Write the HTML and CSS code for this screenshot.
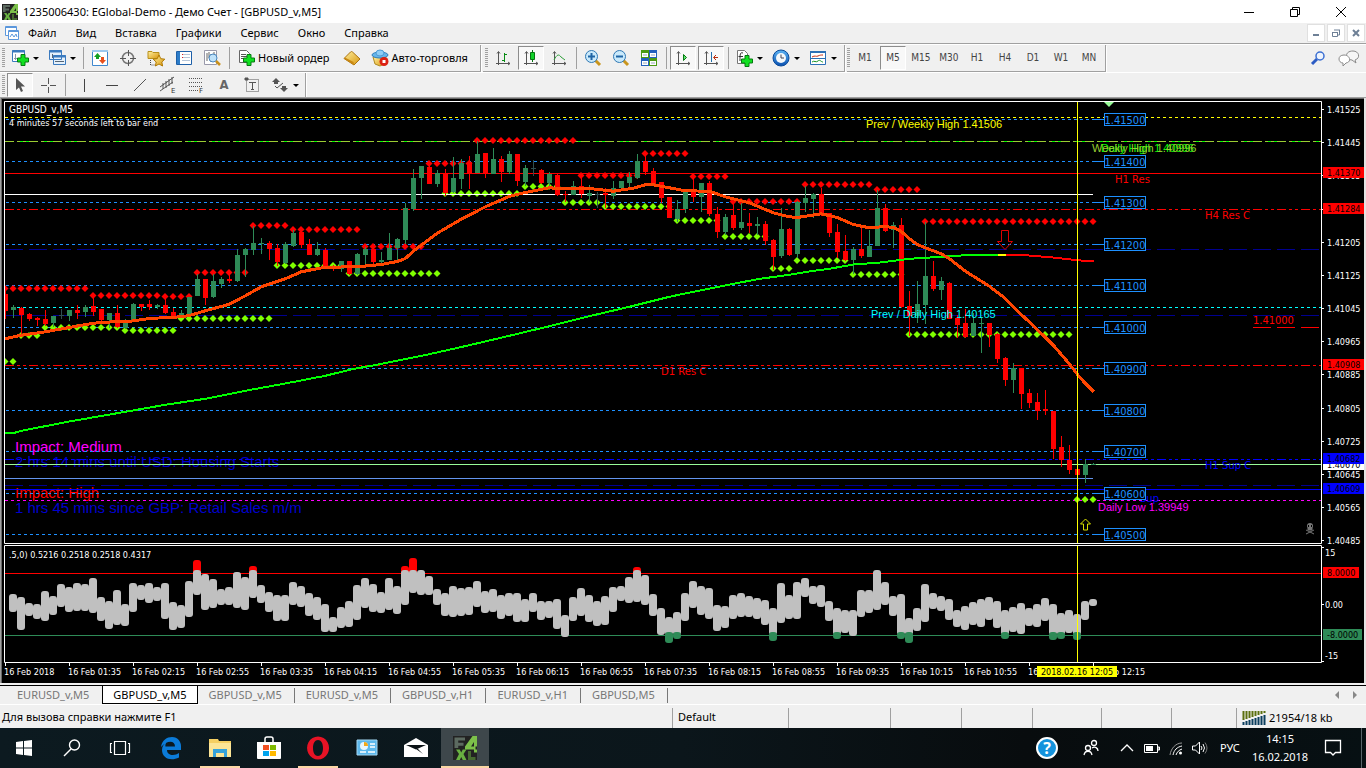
FILE: index.html
```html
<!DOCTYPE html>
<html lang="ru">
<head>
<meta charset="utf-8">
<title>1235006430: EGlobal-Demo - Демо Счет - [GBPUSD_v,M5]</title>
<link rel="stylesheet" href="styles.css">
</head>
<body>
<svg class="defs" aria-hidden="true">
  <defs>
    <linearGradient id="gold" x1="0" y1="0" x2="1" y2="1"><stop offset="0" stop-color="#fff0a0"/><stop offset="1" stop-color="#d8960c"/></linearGradient>
    <linearGradient id="blue" x1="0" y1="0" x2="0" y2="1"><stop offset="0" stop-color="#5cb4f4"/><stop offset="1" stop-color="#0a50b0"/></linearGradient>
    <symbol id="plus" viewBox="0 0 12 12"><path d="M4 .5h4V4h3.500v4H8v3.500H4V8H.5V4H4z" fill="#10e020" stroke="#067a10"/></symbol>
    <symbol id="axes" viewBox="0 0 16 16"><path d="M3.500 15V2M1 13.500h14M2 3.500l1.500-2 1.500 2M13 12l2 1.500-2 1.500" fill="none" stroke="#555"/></symbol>
    <symbol id="fx4" viewBox="0 0 16 16"><path d="M0 0h16v16H0z" fill="#222"/><path d="M1 1h7v2H3.500v1.500H7v2H3.500V8H1z" fill="#5c6a60"/><path d="M13 0h3v7h-2V4l-2 3h3v2H8V7zM14 9h2v2h-2z" fill="#7cc04a"/><path d="M2 9h2.500l1 2 1-2H9l-2 3 2 4H6.500l-1-2-1 2H2l2-4z" fill="#69b141"/><path d="M10 10h2v4h3v2h-5z" fill="#466b30"/></symbol>
  </defs>
</svg>

<header class="title">
  <svg class="i16" viewBox="0 0 16 16"><use href="#fx4"/></svg>
  <h1>1235006430: EGlobal-Demo - Демо Счет - [GBPUSD_v,M5]</h1>
  <div class="winbtns">
    <button aria-label="Свернуть"><svg viewBox="0 0 12 12"><path d="M1 6.500h10" stroke="#000"/></svg></button>
    <button aria-label="Развернуть"><svg viewBox="0 0 12 12"><path d="M1.500 3.500h7v7h-7zM3.500 3.500v-2h7v7h-2" fill="none" stroke="#000"/></svg></button>
    <button aria-label="Закрыть"><svg viewBox="0 0 12 12"><path d="M1 1l10 10M11 1L1 11" stroke="#000"/></svg></button>
  </div>
</header>

<nav class="menu">
  <svg class="i16" viewBox="0 0 16 16"><path d="M1.500 1.500h11v9h-11z" fill="#fff" stroke="#5b97dc"/><path d="M1 2.500h12" stroke="#5b97dc"/><path d="M4.500 5.500h10v9h-10z" fill="#fff" stroke="#5b97dc"/><path d="M5 6.500h9M6 12l2-3 2 3 2-3 1 3" fill="none" stroke="#5b97dc"/></svg>
  <button>Файл</button><button>Вид</button><button>Вставка</button><button>Графики</button><button>Сервис</button><button>Окно</button><button>Справка</button>
  <div class="mdi">
    <button aria-label="Свернуть окно"><svg viewBox="0 0 10 10"><path d="M2 7h6" stroke="#6e8096" stroke-width="2"/></svg></button>
    <button aria-label="Восстановить окно"><svg viewBox="0 0 10 10"><path d="M1.500 4.500h5v4h-5zM3 2h6M8.500 2v5h-2M1 4.500h6" fill="none" stroke="#6e8096"/></svg></button>
    <button aria-label="Закрыть окно"><svg viewBox="0 0 10 10"><path d="M2 2l6 6M8 2L2 8" stroke="#6e8096" stroke-width="2"/></svg></button>
  </div>
</nav>

<div class="row">
  <div class="bar">
    <i class="grip"></i>
    <button class="drop" aria-label="Новый график"><svg viewBox="0 0 18 18"><path d="M1.500 1.500h12v11h-12z" fill="#fff" stroke="#3a7abf"/><path d="M1 2.500h13" stroke="#3a7abf" stroke-width="2"/><path d="M4.500 5v6M3 9.500h7" stroke="#89a"/><use href="#plus" x="6" y="5" width="12" height="12"/></svg><i class="arr"></i></button>
    <button class="drop" aria-label="Профили"><svg viewBox="0 0 18 18"><path d="M1.500 1.500h12v9h-12zM5.500 6.500h12v9h-12z" fill="#e6f1fb" stroke="#3a7abf"/><path d="M1 2.500h13M5 7.500h13" stroke="#3a7abf" stroke-width="2"/><path d="M7 12.500h9M4.500 5v4" stroke="#567"/></svg><i class="arr"></i></button>
    <i class="sep"></i>
    <button aria-label="Обзор рынка"><svg viewBox="0 0 18 18"><path d="M1.500 1.500h15v15h-15z" fill="#fff" stroke="#3f88cf"/><path d="M1 2h16" stroke="#9cc8ee" stroke-width="2"/><path d="M3 8l3.500-4L10 8H8v2H5V8z" fill="#12a022"/><path d="M8 11l3.500 4 3.500-4h-2V8h-3v3z" fill="#e8501c"/></svg></button>
    <button aria-label="Окно данных"><svg viewBox="0 0 18 18"><circle cx="9" cy="9" r="5.500" fill="none" stroke="#777" stroke-width="1.500"/><path d="M9.500 1v6M9.500 11v6M1 9.500h6M11 9.500h6" stroke="#555"/></svg></button>
    <button aria-label="Навигатор"><svg viewBox="0 0 18 18"><path d="M1 2.500h4l1 1h6v6H1z" fill="url(#gold)" stroke="#b8901c"/><path d="M3.500 11v5h4" fill="none" stroke="#444" stroke-dasharray="1 1"/><path d="M12 6l1.800 3.700 4 .5-3 2.800.8 4-3.600-2-3.600 2 .8-4-3-2.800 4-.5z" fill="url(#gold)" stroke="#b07800"/></svg></button>
    <button aria-label="Терминал"><svg viewBox="0 0 18 18"><path d="M1.500 2.500h15v13h-15z" fill="#fff" stroke="#1d5fa8"/><path d="M2 3h3v12H2z" fill="#2c7cc8"/><path d="M7 5.500h8M7 8.500h8M7 11.500h8" stroke="#b5c5d8"/><path d="M7 5.500h1M7 8.500h1" stroke="#d22"/></svg></button>
    <button aria-label="Тестер"><svg viewBox="0 0 18 18"><path d="M1.500 1.500h12v14h-12z" fill="#fff" stroke="#99a"/><path d="M4 4v8M6 3v6M8 5v8M11 3v8" stroke="#666"/><circle cx="10" cy="9" r="4" fill="#bfe2fa" stroke="#4a86bd"/><path d="M13 12l4 4" stroke="#c9901a" stroke-width="2.500"/></svg></button>
    <i class="sep"></i>
    <button class="text"><svg viewBox="0 0 18 18"><path d="M2.500 1.500h7l3 3v9h-10z" fill="#fff" stroke="#666"/><path d="M4 5.500h5M4 7.500h6M4 9.500h4" stroke="#555"/><use href="#plus" x="6" y="5" width="12" height="12"/></svg>Новый ордер</button>
    <button aria-label="MetaEditor"><svg viewBox="0 0 18 18"><path d="M1 9.500L7.500 3q1-1 2 0L17 10l-6 6z" fill="url(#gold)" stroke="#ab7412"/><path d="M1 9.500L11 16l-.5-3L2 8.500z" fill="#c98812"/></svg></button>
    <button class="text"><svg viewBox="0 0 18 18"><path d="M2 8h13l-2 7-4 2-5-2z" fill="url(#gold)" stroke="#b08a20"/><ellipse cx="9" cy="6" rx="8" ry="3" fill="#66b5ea" stroke="#2f80bd"/><ellipse cx="9" cy="4" rx="4" ry="3" fill="#8fcdf5" stroke="#4d9cd5"/><circle cx="13" cy="12.500" r="4.500" fill="#dc2113"/><path d="M11.500 11h3v3h-3z" fill="#fff"/></svg>Авто-торговля</button>
  </div>
  <div class="bar">
    <i class="grip"></i>
    <button aria-label="Бары"><svg viewBox="0 0 16 16"><use href="#axes"/><path d="M9.500 3v9M9.500 4.500H12M7 10.500h2" stroke="#078a12"/></svg></button>
    <button class="on" aria-label="Свечи"><svg viewBox="0 0 16 16"><use href="#axes"/><path d="M9.500 0v12" stroke="#067312"/><path d="M7.500 2.500h4v7h-4z" fill="#10d228" stroke="#067312"/></svg></button>
    <button aria-label="Линия"><svg viewBox="0 0 16 16"><use href="#axes"/><path d="M3 10c3-6 5-6 7-3l4 3" fill="none" stroke="#2fa03a"/></svg></button>
    <i class="sep"></i>
    <button aria-label="Увеличить"><svg viewBox="0 0 18 18"><path d="M11 11l5 5" stroke="#c9951d" stroke-width="3"/><circle cx="7.500" cy="7.500" r="6" fill="#c9e9fb" stroke="#2f78b4"/><path d="M4 7.500h7M7.500 4v7" stroke="#1f65a5" stroke-width="2"/></svg></button>
    <button aria-label="Уменьшить"><svg viewBox="0 0 18 18"><path d="M11 11l5 5" stroke="#c9951d" stroke-width="3"/><circle cx="7.500" cy="7.500" r="6" fill="#c9e9fb" stroke="#2f78b4"/><path d="M4 7.500h7" stroke="#1f65a5" stroke-width="2"/></svg></button>
    <button aria-label="Плитка"><svg viewBox="0 0 18 18"><path d="M1 1h8v8H1zM9 9h8v8H9z" fill="#4a9a12"/><path d="M9 1h8v8H9zM1 9h8v8H1z" fill="#2360bd"/><path d="M2 4h6v4H2zM10 4h6v4h-6zM2 12h6v4H2zM10 12h6v4h-6z" fill="#fff"/><path d="M3 6h4M11 6h4M3 14h4M11 14h4" stroke="#9ab"/></svg></button>
    <i class="sep"></i>
    <button class="on" aria-label="Автопрокрутка"><svg viewBox="0 0 16 16"><use href="#axes"/><path d="M8.500 4.500l3 3-3 3z" fill="#62e070" stroke="#067a12"/></svg></button>
    <button class="on" aria-label="Сдвиг графика"><svg viewBox="0 0 16 16"><use href="#axes"/><path d="M8.500 2v10" stroke="#2470aa"/><path d="M15 7.500h-4M13 5l-2.500 2.500L13 10" fill="none" stroke="#b82c0c"/></svg></button>
    <i class="sep"></i>
    <button class="drop" aria-label="Индикаторы"><svg viewBox="0 0 18 18"><path d="M2.500 1.500h7l3 3v10h-10z" fill="#fff" stroke="#777"/><path d="M8 4c-3-1-3 1-3 8M3.500 7.500H8" fill="none" stroke="#333"/><use href="#plus" x="6" y="6" width="12" height="12"/></svg><i class="arr"></i></button>
    <button class="drop" aria-label="Периоды"><svg viewBox="0 0 18 18"><circle cx="9" cy="9" r="8" fill="url(#blue)" stroke="#0a4a9a"/><circle cx="9" cy="9" r="5" fill="#f4f8fb"/><path d="M9 5.500V9h3" fill="none" stroke="#445"/></svg><i class="arr"></i></button>
    <button class="drop" aria-label="Шаблоны"><svg viewBox="0 0 18 18"><path d="M1.500 2.500h15v13h-15z" fill="#fff" stroke="#2b6fb5"/><path d="M1 3h16" stroke="#2b6fb5" stroke-width="2"/><path d="M2 9.500h14" stroke="#2b6fb5"/><path d="M3 8c3-2 4 0 6-1s3-1 5-1" fill="none" stroke="#c62c10"/><path d="M3 13c2-2 4 1 6-1s3 1 5 1" fill="none" stroke="#159424"/></svg><i class="arr"></i></button>
  </div>
  <div class="bar tf">
    <i class="grip"></i>
    <button>M1</button><button class="on">M5</button><button>M15</button><button>M30</button><button>H1</button><button>H4</button><button>D1</button><button>W1</button><button>MN</button>
  </div>
  <div class="right">
    <button aria-label="Поиск"><svg viewBox="0 0 18 18"><path d="M8 9l-5 5" stroke="#2c5cc4" stroke-width="3"/><circle cx="11" cy="6" r="4" fill="#eef4fd" stroke="#3b6fd2" stroke-width="1.500"/></svg></button>
    <button class="chat" aria-label="Чат"><svg viewBox="0 0 22 18"><path d="M15 1c-9 0-8 9-1 9l4 3-1-3c6-2 4-9-2-9z" fill="#f6f6f6" stroke="#8a8a8a"/><path d="M6 5c-7 0-6 8-1 8v3l3-3c6-1 4-8-2-8z" fill="#fff" stroke="#8a8a8a"/></svg></button>
  </div>
</div>

<div class="row second">
  <div class="bar">
    <i class="grip"></i>
    <button class="on" aria-label="Курсор"><svg viewBox="0 0 16 16"><path d="M4 1v12l3-2.500 2 4.500 2-1-2-4.500h4z" fill="#555"/></svg></button>
    <button aria-label="Перекрестие"><svg viewBox="0 0 16 16"><path d="M8.500 1v6M8.500 10v6M1 8.500h6M10 8.500h6" stroke="#555"/></svg></button>
    <i class="sep"></i>
    <button aria-label="Вертикальная линия"><svg viewBox="0 0 16 16"><path d="M8.500 2v13" stroke="#444"/></svg></button>
    <button aria-label="Горизонтальная линия"><svg viewBox="0 0 16 16"><path d="M2 8.500h12" stroke="#444"/></svg></button>
    <button aria-label="Трендовая линия"><svg viewBox="0 0 16 16"><path d="M2 14L14 2" stroke="#555"/></svg></button>
    <button aria-label="Канал"><svg viewBox="0 0 18 18"><path d="M1 11L15 1M1 15L14 6M4 7v6M7 5v7M10 3v7M13 1v7" stroke="#555"/><text x="12" y="17" class="tiny">E</text></svg></button>
    <button aria-label="Фибоначчи"><svg viewBox="0 0 18 18"><path d="M2 2.500h14M2 6.500h14M2 10.500h14M2 14.500h9" stroke="#555" stroke-dasharray="1 1"/><text x="12" y="17" class="tiny">F</text></svg></button>
    <button class="letter">A</button>
    <button aria-label="Метка"><svg viewBox="0 0 18 18"><path d="M3.500 3.500h12v12h-12z" fill="none" stroke="#555" stroke-dasharray="1 1"/><path d="M2 2h3v2H2zM6 6.500h7M9.500 6v7M8 13.500h3" fill="#555" stroke="#555"/></svg></button>
    <button class="drop" aria-label="Стрелки"><svg viewBox="0 0 18 18"><path d="M5 2l4 4H7v2H3V6H1zM13 16l-4-4h2v-2h4v2h2z" fill="#555"/><path d="M4 10l2 2 6-5" fill="none" stroke="#555"/></svg><i class="arr"></i></button>
  </div>
</div>

<main class="chart"><svg id="chart" viewBox="0 97 1366 588" preserveAspectRatio="none" role="img" aria-label="GBPUSD M5"></svg></main>

<nav class="tabs">
  <button>EURUSD_v,M5</button><button class="active">GBPUSD_v,M5</button><button>GBPUSD_v,M5</button><button>EURUSD_v,M5</button><button>GBPUSD_v,H1</button><button>EURUSD_v,H1</button><button>GBPUSD,M5</button>
  <div class="scroll"><button aria-label="Назад"><i class="lt"></i></button><button aria-label="Вперед"><i class="gt"></i></button></div>
</nav>

<footer class="status">
  <span>Для вызова справки нажмите F1</span><span>Default</span><span></span><span></span><span></span><span></span><span></span><span></span>
  <span class="traffic"><svg viewBox="0 0 24 14"><path d="M1.500 0v9M4.500 0v8M7.500 0v7M10.500 0v6M13.500 0v5M16.500 0v4M19.500 0v3M22.500 0v2" stroke="#5c7010" stroke-width="2"/><path d="M1.500 11v3M4.500 10v4M7.500 9v5M10.500 8v6M13.500 7v7M16.500 6v8M19.500 5v9M22.500 4v10" stroke="#0c3f5e" stroke-width="2"/></svg>21954/18 kb</span>
</footer>

<div class="taskbar">
  <button aria-label="Пуск"><svg viewBox="0 0 24 24"><path d="M4 6l7-1v6.500H4zM12 5l8-1v7.500h-8zM4 12.500h7V19l-7-1zM12 12.500h8V20l-8-1z" fill="#fff"/></svg></button>
  <button aria-label="Поиск Windows"><svg viewBox="0 0 24 24"><circle cx="14.500" cy="9" r="5" fill="none" stroke="#fff" stroke-width="1.400"/><path d="M11 13l-7 7" stroke="#fff" stroke-width="1.400"/></svg></button>
  <button aria-label="Представление задач"><svg viewBox="0 0 24 24"><path d="M6.500 5.500h11v13h-11zM4 7.500H2.500v9H4M20 7.500h1.500v9H20" fill="none" stroke="#fff" stroke-width="1.200"/></svg></button>
  <div class="pinned">
    <button aria-label="Edge"><svg viewBox="0 0 24 24"><path d="M2 11C3 4 8 1 13 1c6 0 9 5 9 9v4H8c0 6 8 6 12 3v4.500c-8 4-17 1-17-7.500 0-4 2-6 5-8-1 1-2 3-1.500 4.500h9.500C16 4 8 4 2 11z" fill="#0b7bd8"/></svg></button>
    <button class="run" aria-label="Проводник"><svg viewBox="0 0 24 24"><path d="M1 3h9l1 2h12v16H1z" fill="#f5cf62"/><path d="M1 7h22v14H1z" fill="#fce596"/><path d="M5 13h14v8h-3v-4H8v4H5z" fill="#36a3da"/></svg></button>
    <button aria-label="Магазин"><svg viewBox="0 0 24 24"><path d="M0 6h24v16q0 1-1 1H1q-1 0-1-1z" fill="#fff"/><path d="M8 7V3q0-2 2-2h4q2 0 2 2v4" fill="none" stroke="#fff" stroke-width="1.500"/><path d="M6 9h6v5H6z" fill="#f25022"/><path d="M13 9h6v5h-6z" fill="#7fba00"/><path d="M6 15h6v5H6z" fill="#00a4ef"/><path d="M13 15h6v5h-6z" fill="#ffb900"/></svg></button>
    <button class="run" aria-label="Opera"><svg viewBox="0 0 24 24"><path fill-rule="evenodd" d="M12 0.500a11 11.500 0 1 0 .1 0zM12 4c3 0 5 3 5 8s-2 8-5 8-5-3-5-8 2-8 5-8z" fill="#e81325"/></svg></button>
    <button aria-label="Панель"><svg viewBox="0 0 24 24"><path d="M2 4h20v15H2z" fill="#5db8ec" stroke="#a5d8f5"/><circle cx="9" cy="10" r="4" fill="#e9f6fd"/><path d="M9 10V6a4 4 0 0 1 4 4z" fill="#f5a818"/><path d="M15 8h5M15 11h5M5 16h6M13 16h7" stroke="#fff" stroke-width="1.500"/></svg></button>
    <button aria-label="Почта"><svg viewBox="0 0 24 24"><path d="M0 9l12-7 12 7v12H0z" fill="#fff"/><path d="M2 9h20l-10 4.500zM12 13l7 5-5-5z" fill="#0b1216"/></svg></button>
    <button class="run cur" aria-label="MetaTrader"><svg viewBox="0 0 24 24"><use href="#fx4"/></svg></button>
  </div>
  <div class="tray">
    <button class="help" aria-label="Справка Windows">?</button>
    <button class="ppl" aria-label="Люди"><svg viewBox="0 0 20 20"><g fill="none" stroke="#fff" stroke-width="1.300"><circle cx="7" cy="10" r="2.500"/><path d="M3 17c1-5 7-5 8 0"/><circle cx="13" cy="5" r="2.500"/><path d="M11 10c3-2 6 0 6 3"/></g></svg></button>
    <button class="chev" aria-label="Скрытые значки"><svg viewBox="0 0 16 16"><path d="M2 11l6-6 6 6" fill="none" stroke="#fff" stroke-width="1.300"/></svg></button>
    <button class="ic" aria-label="Батарея"><svg viewBox="0 0 16 16"><path d="M.5 4.500h13v8H.5zM14 7h1.500v3H14z" fill="none" stroke="#fff"/><path d="M2 6h7v5H2z" fill="#fff"/></svg></button>
    <button class="ic" aria-label="Сеть"><svg viewBox="0 0 16 16"><g fill="none" stroke="#999"><path d="M2 15C3 8 8 3 14 3"/><path d="M5 15c1-5 4-8 9-9" stroke="#fff"/><path d="M8 15c1-3 3-5 6-6" stroke="#fff"/></g><circle cx="12.500" cy="13" r="1.500" fill="#fff"/></svg></button>
    <button class="ic" aria-label="Звук"><svg viewBox="0 0 16 16"><path d="M.5 6h3l4-4v12l-4-4h-3z" fill="none" stroke="#fff"/><path d="M9 6q2 2 0 4M11 4q3 4 0 8" fill="none" stroke="#fff"/><path d="M13 2.500q4 5.500 0 11" fill="none" stroke="#777"/></svg></button>
    <button class="lang">РУС</button>
    <div class="clock"><time>14:15</time><time>16.02.2018</time></div>
    <button class="note" aria-label="Уведомления"><svg viewBox="0 0 18 18"><path d="M1.500 1.500h15v12h-5l-2.500 2.500-2.500-2.500h-5z" fill="none" stroke="#fff" stroke-width="1.300"/></svg></button>
  </div>
</div>
<script src="chart.js"></script>
</body>
</html>
```
FILE: styles.css
```css
* { box-sizing: border-box; }
html, body { height: 100%; margin: 0; }
body {
  display: flex; flex-direction: column; overflow: hidden;
  background: #f0f0f0; color: #000;
  font: 11px/16px "Noto Sans", "Open Sans", sans-serif;
}
button { border: 0; padding: 0; margin: 0; background: none; font: inherit; color: inherit; display: flex; align-items: center; justify-content: center; }
svg { display: block; flex: none; }
.defs { position: absolute; width: 0; height: 0; }
.i16 { width: 16px; height: 16px; }

.title { height: 23px; flex: none; display: flex; align-items: center; gap: 5px; padding-left: 2px; background: #fff; }
.title h1 { margin: 0; font-size: 11px; font-weight: 400; white-space: nowrap; }
.winbtns { margin-left: auto; display: flex; padding-right: 2px; }
.winbtns button { width: 46px; height: 22px; }
.winbtns svg { width: 12px; height: 12px; }

.menu { height: 21px; flex: none; display: flex; align-items: center; padding-left: 4px; border-bottom: 1px solid #a0a0a0; }
.menu > button { padding: 0 10px 0 9px; }
.menu .i16 { margin-right: -1px; }
.mdi { margin-left: auto; display: flex; gap: 2px; padding-right: 1px; }
.mdi button { width: 18px; height: 18px; background: #fff; border: 1px solid #e0e0e0; }
.mdi svg { width: 10px; height: 10px; }

.row { height: 28px; flex: none; display: flex; gap: 2px; border-top: 1px solid #fff; }
.second { height: 25px; }
.bar { display: flex; align-items: center; gap: 2px; padding: 0 3px 0 2px; border: solid #a0a0a0; border-width: 0 1px 1px 0; box-shadow: 1px 1px #fff; }
.second .bar { border-bottom: 0; box-shadow: 1px 0 #fff; }
.grip { width: 3px; height: 20px; background: repeating-linear-gradient(#a0a0a0 0 1px, #f0f0f0 1px 2px); }
.sep { width: 1px; height: 22px; margin: 0 1px 0 2px; background: #a0a0a0; }
.second .sep { margin-right: 3px; }
.bar button { width: 26px; height: 24px; }
.bar button svg { width: 18px; height: 18px; }
.bar button svg[viewBox="0 0 16 16"] { width: 16px; height: 16px; }
.bar .on { background: #f8f8f8; border: 1px solid #fff; border-top-color: #8c8c8c; border-left-color: #8c8c8c; }
.bar .drop { width: 35px; gap: 4px; }
.bar .text { width: auto; gap: 3px; padding: 0 7px 0 4px; white-space: nowrap; }
.bar .text:last-child { padding-right: 9px; }
.arr { border: 3px solid transparent; border-top-color: #000; border-bottom: 0; }
.tf { padding-left: 0; }
.tf button, .letter { font: 10px/14px "DejaVu Sans Condensed", sans-serif; color: #444; }
.bar .letter { font-size: 13px; font-weight: 700; color: #666; }
.tiny { font: 7px "DejaVu Sans", sans-serif; fill: #333; }
.right { margin-left: auto; display: flex; align-items: center; gap: 11px; padding-right: 6px; }
.right svg { width: 18px; height: 18px; }
.right .chat svg { width: 22px; }

.chart { flex: 1; min-height: 0; overflow: hidden; background: #000; }
.chart svg { width: 100%; height: 100%; }
.ax { font: 9px "DejaVu Sans Condensed", sans-serif; }
.sy { font: 10px "DejaVu Sans Condensed", sans-serif; }
.lv { font: 11px "DejaVu Sans Condensed", sans-serif; }
.vd { font: 10px "DejaVu Sans", sans-serif; }
.ar { font: 11px "Liberation Sans", sans-serif; }
.nw { font: 15px "Liberation Sans", sans-serif; }

.tabs { height: 20px; flex: none; display: flex; align-items: stretch; border-top: 1px solid #000; border-bottom: 1px solid #fff; color: #777; }
.tabs > button { padding: 0 12px 2px 11px; border-right: 1px solid #777; margin: 2px 0; height: 15px; }
.tabs > button:first-child { padding-left: 17px; padding-right: 13px; border-right: 0; }
.tabs > .active { margin: 0; height: 18px; background: #fff; color: #000; border: 1px solid #000; border-top: 0; padding: 0 10px; }
.scroll { margin-left: auto; display: flex; gap: 14px; padding-right: 9px; }
.lt, .gt { border: 4px solid transparent; }
.lt { border-right-color: #888; border-left: 0; }
.gt { border-left-color: #888; border-right: 0; }

.status { height: 23px; flex: none; display: grid; grid-template-columns: 1fr 116px 102px 71px 71px 69px 70px 65px 130px; align-items: stretch; padding-top: 3px; line-height: 18px; }
.status span { padding-left: 5px; border-left: 1px solid #a0a0a0; white-space: nowrap; }
.status span:first-child { padding-left: 2px; border: 0; }
.traffic { display: flex; align-items: center; gap: 3px; }
.traffic svg { width: 24px; height: 14px; }

.taskbar { height: 40px; flex: none; display: flex; background: linear-gradient(90deg, #0c1a20, #0b161b 50%, #080c0e 75%, #071013); color: #fff; }
.taskbar button { width: 48px; height: 40px; }
.taskbar button svg { width: 24px; height: 24px; }
.pinned { display: flex; gap: 1px; padding-left: 3px; }
.pinned .run { background: linear-gradient(#fbd7a5, #fbd7a5) center bottom / 40px 2px no-repeat; }
.pinned .cur { background: linear-gradient(#fbd7a5, #fbd7a5) center bottom / 48px 2px no-repeat #3e474b; }
.tray { margin-left: auto; display: flex; align-items: center; padding-right: 8px; background: linear-gradient(#59656a, #59656a) right 4px top / 1px 100% no-repeat; }
.taskbar .help { width: 22px; height: 22px; border-radius: 50%; border: 2px solid #fff; background: #1593dd; font-size: 16px; font-weight: 700; margin-right: 23px; }
.taskbar .ppl, .taskbar .ppl svg { width: 20px; height: 20px; }
.taskbar .ppl { margin-right: 14px; }
.taskbar .chev, .taskbar .ic { width: 24px; }
.taskbar .chev svg, .taskbar .ic svg { width: 16px; height: 16px; }
.taskbar .chev { margin-right: 1px; }
.taskbar .lang { width: 36px; }
.clock { width: 64px; display: flex; flex-direction: column; align-items: center; gap: 2px; }
.taskbar .note { width: 42px; margin-right: 4px; }
.taskbar .note svg { width: 18px; height: 18px; }
```
FILE: chart.js
```js
const parts = [];
const px = k => 5 + 8 * k;
const rect = (x, y, w, h, fill, extra = '') => parts.push(`<rect x="${x}" y="${y}" width="${w}" height="${h}" fill="${fill}" ${extra}/>`);
const line = (y, x1, x2, color, dash = '', off = 0) =>
  parts.push(`<path d="M${x1} ${y + 0.5}H${x2}" stroke="${color}" ${dash ? `stroke-dasharray="${dash}" stroke-dashoffset="${off}"` : ''}/>`);
const text = (x, y, cls, fill, s, anchor = 'start') => parts.push(`<text x="${x}" y="${y}" class="${cls}" fill="${fill}" text-anchor="${anchor}">${s}</text>`);
const DODGER = '#1e90ff', RED = '#ff0000', GREEN = '#2e8b57', LIME = '#7fff00';

rect(0, 97, 1366, 588, '#000');
rect(0, 97, 1366, 1, '#a0a0a0'); rect(0, 98, 1366, 1, '#696969');
rect(0, 97, 1, 588, '#a0a0a0'); rect(1, 98, 1, 586, '#696969');
rect(1364, 98, 2, 587, '#e3e3e3'); rect(0, 683, 1366, 2, '#f0f0f0');

// news messages
text(15, 452, 'nw', '#ff00ff', 'Impact: Medium');
text(15, 467, 'nw', '#0000cd', '2 hrs 14 mins until USD: Housing Starts');
text(15, 498, 'nw', '#ff0000', 'Impact: High');
text(15, 513, 'nw', '#0000cd', '1 hrs 45 mins since GBP: Retail Sales m/m');

// horizontal levels
line(117, 5, 1321, '#ffff00', '3 3');
line(141, 5, 1321, '#9acd32', '9 3');
line(141, 20, 1321, '#00ff00', '3 21');
line(141, 26, 1321, '#00ff00', '3 21');
line(173, 5, 1321, RED);
line(209, 5, 1321, RED, '9 3 3 3 3 3');
line(249, 5, 1321, '#000090', '18 6');
line(307, 5, 1321, '#00ffff', '3 3');
line(315, 5, 1321, '#000090', '18 6');
line(327, 1253, 1321, RED, '18 6');
line(365, 5, 1321, RED, '9 3 3 3 3 3');
line(459, 5, 1321, '#0000ff', '9 3 3 3 3 3');
line(485, 5, 1321, '#000090', '18 6');
line(489, 5, 1321, '#0000ff');
line(500, 5, 1321, '#ff00ff', '3 3');
text(1140, 502, 'vd', '#0000ff', 'Sup');
const levels = [[119, '1.41500'], [161, '1.41400'], [202, '1.41300'], [244, '1.41200'], [285, '1.41100'], [327, '1.41000'], [368, '1.40900'], [410, '1.40800'], [451, '1.40700'], [493, '1.40600'], [534, '1.40500']];
for (const [y] of levels) line(y, 6, 1092, DODGER, '3 3');

// fractal dots: [first bar, last bar, y]
const dots = (list, color) => {
  for (const [a, b, z] of list) for (let k = a; k <= b; k++) {
    const x = px(k), y = 98.5 + Math.round(z / 3);
    parts.push(`<path d="M${x - 3.500} ${y}l3.500-3.500 3.500 3.500-3.500 3.500z" fill="${color}"/>`);
  }
};
parts.push('<clipPath id="in"><rect x="5" y="102" width="1316" height="441"/></clipPath><g clip-path="url(#in)">');
dots([[0,10,571],[11,19,592],[20,23,595],[24,30,523],[31,35,382],[36,44,394],[45,52,445],[53,58,196],[59,71,127],[72,79,232],[80,85,166],[86,90,235],[91,99,310],[100,108,259],[109,114,274],[115,136,370]], RED);
dots([[0,1,790],[2,4,712],[5,14,688],[15,21,697],[22,33,661],[34,42,502],[43,54,526],[55,64,286],[65,69,265],[70,74,313],[75,83,325],[84,89,367],[90,95,415],[96,98,511],[99,105,487],[106,112,529],[113,133,709],[134,136,1204]], LIME);

line(194, 5, 1093, '#fff');
line(478, 5, 1093, '#6495ed');
line(464, 5, 1321, '#98fb98');

// candles: direction, high, body top, body bottom, low (thirds of a pixel below 98)
const candles = `R570,588,638,662 G620,628,636,660 R627,630,651,715 R645,648,663,668 R657,660,666,684 R636,663,678,685 G654,654,675,686 D633,652,654,664 G636,636,654,668 R621,636,645,663 G620,628,642,657 R598,624,642,654 R633,633,666,670 G645,645,666,690 R621,645,688,690 G662,666,690,692 G615,618,669,671 R618,618,627,639 R606,618,627,636 G618,621,627,633 R600,621,645,648 R630,642,654,660 G636,645,654,660 G597,597,648,650 G527,543,594,594 R543,543,600,620 G528,549,597,600 G537,543,558,570 R520,543,549,555 G453,471,549,552 G450,453,471,537 G384,435,456,471 G420,435,438,468 R430,435,453,486 R438,450,492,505 G432,438,495,498 G396,405,444,447 R400,402,441,450 R423,438,471,471 G432,453,471,474 R450,456,507,510 R500,504,513,518 G489,489,513,522 R489,489,528,530 G465,468,528,530 G448,453,471,498 R450,453,492,507 G462,486,492,503 G405,450,486,487 G420,423,450,490 G315,330,426,438 G213,240,333,339 G204,204,240,303 R204,207,258,258 G216,225,258,267 R213,228,285,294 G177,240,282,285 G183,195,243,273 R174,192,225,273 G130,168,225,225 R165,165,228,240 G150,183,228,228 R174,183,222,252 G159,168,222,228 R168,168,249,264 G201,210,252,264 D186,210,213,234 R213,216,255,258 G222,228,255,264 R228,231,291,294 R279,288,291,312 G249,264,291,291 R235,264,288,300 G261,285,294,312 D282,287,290,330 R270,286,290,330 G249,270,294,303 G249,249,270,276 G222,237,255,267 G168,189,240,243 R168,189,222,231 R210,219,258,258 R252,252,300,315 R297,297,360,360 G306,333,363,372 G273,279,333,345 R240,276,297,312 G255,255,297,342 R249,255,348,354 R327,348,402,420 G348,357,402,411 R312,351,390,396 G315,372,390,396 R345,375,384,405 G357,378,384,411 R369,378,429,441 R423,426,477,516 G330,393,474,480 R390,393,471,474 G310,312,468,480 G264,300,315,342 G285,288,303,360 R270,288,348,354 R346,346,405,417 R378,402,462,480 R411,459,486,490 G447,453,486,528 R390,453,474,480 G396,444,477,477 G276,330,444,444 R318,330,399,402 G372,381,396,450 R360,381,627,630 R579,624,654,714 G549,618,654,675 G372,534,621,678 R489,534,573,579 G537,549,576,606 R552,555,663,663 R651,660,681,719 R633,675,717,719 G645,675,714,714 G660,675,678,765 R675,675,711,747 R705,708,783,795 R777,780,846,864 G795,810,846,885 R810,810,888,933 R873,885,915,930 R885,912,939,966 R876,933,938,951 R939,939,1053,1083 R1014,1047,1086,1107 R1041,1086,1116,1128 R1110,1113,1131,1206 G1083,1098,1131,1155 G1095,1098,1101,1101`;
candles.split(' ').forEach((c, k) => {
  const color = { R: RED, G: GREEN, D: '#2f4f4f' }[c[0]];
  const [hi, top, bot, lo] = c.slice(1).split(',').map(v => 98 + Math.round(v / 3));
  rect(px(k), hi, 1, Math.max(1, lo - hi), color);
  rect(px(k) - 2, top, 5, Math.max(1, bot - top), color);
});

// moving averages, as [x, y] pairs in thirds of a pixel
const curve = (pts, color, w) => parts.push(`<polyline points="${pts.map(([x, y]) => `${(x / 3).toFixed(1)},${(98 + y / 3 + 0.5).toFixed(1)}`).join(' ')}" fill="none" stroke="${color}" stroke-width="${w}" shape-rendering="crispEdges"/>`);
const shift = (dx, list) => list.map(([x, y]) => [x + dx, y]);
curve([[15,1005],[40,1004],[64,997],[208,969],[352,944],[496,919],[616,901],[736,877],[856,855],[976,832],[1056,812],[1140,797]].concat(
  shift(1140, [[148,767],[268,740],[388,712],[508,683],[628,653],[748,625],[868,595],[940,580],[1060,556],[1140,541]]),
  shift(2280, [[88,529],[160,517],[208,511],[280,498],[352,493],[448,481],[544,475],[616,470],[714,470]])), '#00ff00', 2);
curve(shift(2280, [[714,470],[738,470]]), '#ffff00', 2);
curve(shift(2280, [[738,470],[808,471],[880,477],[952,485],[1001,489]]), RED, 2);
curve([[15,721],[64,710],[136,700],[208,687],[280,674],[352,669],[380,670],[448,660],[544,655],[568,651],[616,637],[688,617],[736,592],[784,565],[856,541],[904,520],[976,506],[1072,505],[1144,498]].concat(
  shift(1140, [[52,489],[76,480],[100,458],[172,404],[244,362],[316,325],[388,294],[436,282],[508,268],[556,271],[628,270],[700,278],[760,269],[796,259],[820,259],[868,268],[916,277],[988,278],[1036,295],[1108,313],[1140,326]]),
  shift(2280, [[16,333],[40,343],[88,355],[112,357],[184,346],[232,357],[280,378],[328,388],[376,384],[400,387],[424,399],[448,420],[472,438],[496,448],[544,466],[568,480],[616,518],[688,563],[736,600],[784,648],[832,693],[880,740],[928,796],[960,838],[1001,880]])), '#ff4500', 3);
parts.push('</g>');

// chart texts
text(9, 113, 'sy', '#fff', 'GBPUSD_v,M5');
text(9, 126, 'ax', '#fff', '4 minutes 57 seconds left to bar end');
text(866, 128, 'ar', '#ffff00', 'Prev / Weekly High 1.41506');
text(871, 318, 'ar', '#00ffff', 'Prev / Daily High 1.40165');
text(1101, 152, 'ar', '#00ff00', 'Daily High 1.40996');
text(1092, 152, 'ar', '#9acd32', 'Weekly High 1.40996');
text(1098, 511, 'ar', '#ff00ff', 'Daily Low 1.39949');
text(1115, 183, 'vd', RED, 'H1 Res');
text(1205, 219, 'vd', RED, 'H4 Res C');
text(661, 375, 'vd', RED, 'D1 Res C');
text(1205, 469, 'vd', '#0000ff', 'H1 Sup C');
text(1253, 324, 'lv', RED, '1.41000');
for (const [y, s] of levels) {
  line(y, 1092, 1104, DODGER);
  parts.push(`<rect x="1104.500" y="${y - 5.500}" width="41" height="12" fill="#000" stroke="${DODGER}"/>`);
  text(1125, y + 5, 'lv', DODGER, s, 'middle');
}
parts.push('<path d="M1001.500 230.500h7v11h4l-7.500 8-7.500-8h4z" fill="none" stroke="#e00000"/>');
parts.push('<path d="M1085.500 519l5 5h-3v6h-4v-6h-3z" fill="#000" stroke="#d8e000"/>');
parts.push('<path d="M1104 102h10l-5 5z" fill="#98fb98"/>');
parts.push('<circle cx="1310" cy="526" r="3" fill="#777"/><path d="M1308 528h4v2h-4zM1306 530l8 4M1314 530l-8 4" fill="#777" stroke="#777"/><path d="M1308 525h1v2h-1zM1311 525h1v2h-1z"/>');

// oscillator
line(573, 5, 1321, RED); line(635, 5, 1321, GREEN);
const osc = '162-215 171-270 190-230 192-236 153-242 168-224 132-200 142-217 129-214 133-213 114-220 171-242 184-267 150-254 192-258 129-215 136-182 129-188 142-185 129-236 187-272 196-266 123-230 90-164 103-212 118-206 148-196 142-196 97-206 111-209 90-173 136-191 157-218 165-242 165-242 126-196 139-202 160-230 172-242 193-278 232-278 202-266 184-263 136-242 115-206 133-218 157-221 115-212 139-223 90-194 90-158 90-166 109-166 148-196 160-230 139-232 145-230 142-226 123-202 154-221 148-218 166-238 160-230 160-248 178-248 160-218 182-238 182-232 178-269 225-290 171-242 145-230 166-248 184-260 169-255 142-218 139-185 112-191 90-185 105-194 163-230 205-287 232-287 217-287 160-245 124-206 139-227 145-238 196-275 199-266 166-238 160-233 169-233 175-238 181-257 205-287 130-250 166-238 126-238 115-173 139-194 136-203 184-245 205-287 211-281 211-290 151-233 151-221 90-209 126-194 169-230 163-287 235-287 205-275 133-248 160-209 169-214 178-242 211-263 199-272 187-257 178-263 172-242 184-266 211-287 202-278 190-284 205-260 193-263 175-245 193-287 220-287 211-281 223-287 184-242 178-200';
const bar = (k, a, b, color) => rect(px(k) - 4, 540 + Math.round(a / 3), 8, Math.round((b - a) / 3), color, 'rx="3"');
for (const [k, a] of [[24, 60], [31, 78], [50, 78], [51, 54], [79, 81]]) bar(k, a, 110, RED);
osc.split(' ').forEach((r, i) => { const [a, b] = r.split('-').map(Number); bar(i + 1, a, b, '#c0c0c0'); });
for (const [k, b] of [[83, 308], [84, 297], [96, 302], [104, 297], [112, 297], [113, 308], [125, 297], [131, 299], [132, 297], [134, 299]]) bar(k, 276, b, GREEN);
text(9, 558, 'ax', '#fff', '.5,0) 0.5216 0.2518 0.2518 0.4317');

// crosshair and frames
rect(1077, 102, 1, 441, '#ffff00'); rect(1077, 546, 1, 116, '#ffff00');
parts.push('<path d="M4.500 101.500H1321.500V543.500H4.500zM4.500 545.500H1321.500V662.500H4.500z" fill="none" stroke="#fff"/>');

// price scale
[[109, '1.41525'], [142, '1.41445'], [175, '1.41365'], [209, '1.41285'], [242, '1.41205'], [275, '1.41125'], [308, '1.41045'], [341, '1.40965'], [374, '1.40885'], [408, '1.40805'], [441, '1.40725'], [474, '1.40645'], [507, '1.40565'], [540, '1.40485']].forEach(([y, s]) => {
  rect(1322, y, 2, 1, '#fff'); text(1327, y + 4, 'ax', '#fff', s);
});
const tag = (y, bg, fg, s, w = 41, h = 11) => { rect(1323, y, w, h, bg); text(1327, y + 9, 'ax', fg, s); };
tag(459, '#fff', '#000', '1.40670');
tag(167, RED, '#000', '1.41370'); tag(203, RED, '#000', '1.41284'); tag(359, RED, '#000', '1.40908');
tag(453, '#0000ff', '#000', '1.40682'); tag(483, '#0000ff', '#000', '1.40609');
rect(1322, 604, 2, 1, '#fff'); rect(1322, 547, 2, 1, '#fff'); rect(1322, 661, 2, 1, '#fff');
text(1325, 556, 'ax', '#fff', '15'); text(1325, 608, 'ax', '#fff', '0.00'); text(1325, 659, 'ax', '#fff', '-15');
tag(567, RED, '#000', '8.0000', 36); tag(629, GREEN, '#000', '-8.0000', 39);

// time scale
['16 Feb 2018', '16 Feb 01:35', '16 Feb 02:15', '16 Feb 02:55', '16 Feb 03:35', '16 Feb 04:15', '16 Feb 04:55', '16 Feb 05:35', '16 Feb 06:15', '16 Feb 06:55', '16 Feb 07:35', '16 Feb 08:15', '16 Feb 08:55', '16 Feb 09:35', '16 Feb 10:15', '16 Feb 10:55', '16 Feb 11:35', '16 Feb 12:15'].forEach((s, i) => {
  rect(5 + 64 * i, 663, 1, 3, '#fff'); text(4 + 64 * i, 675, 'ax', '#fff', s);
});
rect(1037, 666, 80, 11, '#ffff00');
text(1077, 675, 'ax', '#000', '2018.02.16 12:05', 'middle');

document.getElementById('chart').innerHTML = parts.join('');
```
